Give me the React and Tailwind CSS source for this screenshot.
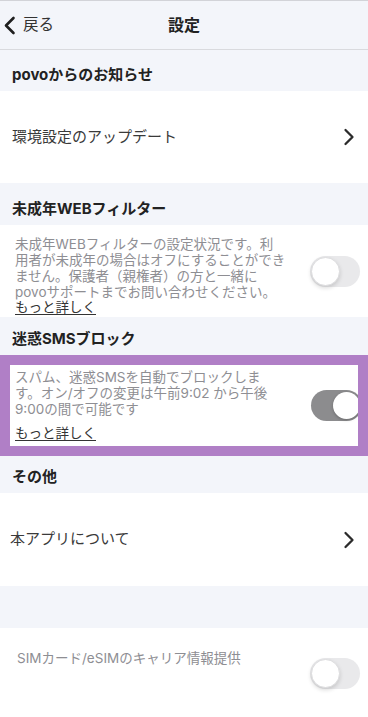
import React from "react";

const font = { fontFamily: 'Inter, "Noto Sans CJK JP", sans-serif' };

function ChevronRight() {
  return (
    <svg width="12" height="18" viewBox="0 0 12 18" fill="none">
      <path d="M2.5 2 L9.5 9 L2.5 16" stroke="#2b2b2b" strokeWidth="2.3" strokeLinecap="round" strokeLinejoin="round" />
    </svg>
  );
}

function ChevronLeft() {
  return (
    <svg width="13" height="19" viewBox="0 0 13 19" fill="none">
      <path d="M10.5 2 L3 9.5 L10.5 17" stroke="#1f1f1f" strokeWidth="2.6" strokeLinecap="round" strokeLinejoin="round" />
    </svg>
  );
}

function Toggle({ on }) {
  if (on) {
    return (
      <div className="w-[51px] h-[31px] rounded-full bg-[#8c8c8e] flex items-center justify-end px-[2px] shrink-0">
        <div className="w-[27px] h-[27px] rounded-full bg-white shadow-[0_1px_3px_rgba(0,0,0,0.25)]" />
      </div>
    );
  }
  return (
    <div className="w-[50px] h-[31px] rounded-full bg-[#e9e9eb] flex items-center justify-start px-[1px] shrink-0">
      <div className="w-[29px] h-[29px] rounded-full bg-white border border-[#dcdcde] shadow-[0_2px_4px_rgba(0,0,0,0.15)]" />
    </div>
  );
}

function SectionHeader({ children, h }) {
  return (
    <div className={`bg-[#f3f5fa] flex items-end pl-[12px] pb-[5px] ${h}`}>
      <span className="text-[15px] leading-[22px] font-bold text-[#222]">{children}</span>
    </div>
  );
}

export default function App() {
  return (
    <div style={font} className="w-[368px] h-[717px] overflow-hidden bg-white">
      {/* Header */}
      <div className="h-[50px] bg-[#f3f5fa] border-t border-[#d2d3d8] border-b border-b-[#d9dade] flex items-center relative">
        <div className="flex items-center pl-[3px] gap-[7px]">
          <ChevronLeft />
          <span className="text-[15.5px] text-[#333]">戻る</span>
        </div>
        <div className="absolute left-0 right-0 text-center pointer-events-none">
          <span className="text-[16px] font-bold text-[#222]">設定</span>
        </div>
      </div>

      <SectionHeader h="h-[41px]">povoからのお知らせ</SectionHeader>

      <div className="h-[92px] flex items-center justify-between pl-[12px] pr-[13px]">
        <span className="text-[15px] text-[#3a3a3a]">環境設定のアップデート</span>
        <ChevronRight />
      </div>

      <SectionHeader h="h-[42px]">未成年WEBフィルター</SectionHeader>

      <div className="h-[92px] flex items-center justify-between pl-[15px] pr-[8px]">
        <div className="text-[13.5px] leading-[16px] text-[#8e8e93] whitespace-nowrap self-start pt-[11px]">
          <div>未成年WEBフィルターの設定状況です。利</div>
          <div>用者が未成年の場合はオフにすることができ</div>
          <div>ません。保護者（親権者）の方と一緒に</div>
          <div>povoサポートまでお問い合わせください。</div>
          <div className="text-[#333] underline underline-offset-2 leading-[14px]">もっと詳しく</div>
        </div>
        <Toggle on={false} />
      </div>

      <SectionHeader h="h-[38px]">迷惑SMSブロック</SectionHeader>

      <div className="relative h-[101px]">
        <div className="h-full flex items-center justify-between pl-[15px] pr-[6px]">
          <div className="self-start pt-[14px] text-[13.5px] leading-[16px] text-[#8e8e93] whitespace-nowrap">
            <div>スパム、迷惑SMSを自動でブロックしま</div>
            <div>す。オン/オフの変更は午前9:02 から午後</div>
            <div>9:00の間で可能です</div>
            <div className="mt-[8px] text-[#333] underline underline-offset-2">もっと詳しく</div>
          </div>
          <Toggle on={true} />
        </div>
        <div className="absolute inset-0 border-[10px] border-[#b07fc6] pointer-events-none" />
      </div>

      <SectionHeader h="h-[37px]">その他</SectionHeader>

      <div className="h-[93px] flex items-center justify-between pl-[10px] pr-[13px]">
        <span className="text-[15px] text-[#3a3a3a]">本アプリについて</span>
        <ChevronRight />
      </div>

      <div className="h-[42px] bg-[#f3f5fa]" />

      <div className="h-[95px] flex items-start justify-between pl-[17px] pr-[8px]">
        <span className="mt-[20px] text-[13.5px] leading-[20px] text-[#8e8e93]">SIMカード/eSIMのキャリア情報提供</span>
        <div className="mt-[30px]">
          <Toggle on={false} />
        </div>
      </div>
    </div>
  );
}
